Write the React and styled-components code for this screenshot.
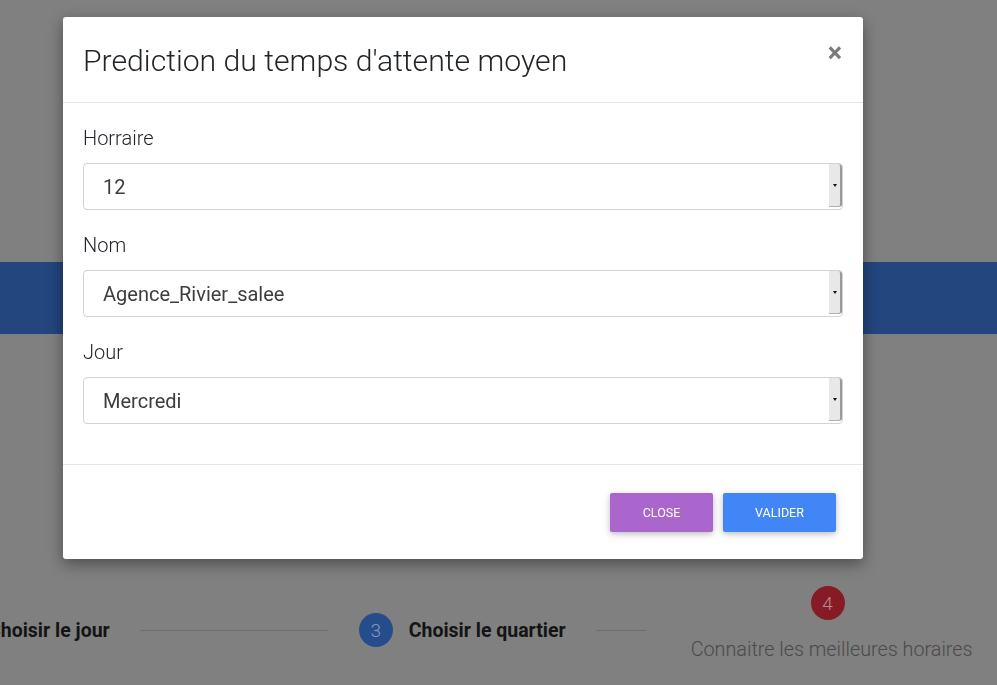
import styled, { createGlobalStyle } from 'styled-components'

const GlobalStyle = createGlobalStyle`
  body {
    margin: 0;
    font-family: Roboto, "Liberation Sans", sans-serif;
    background: #808080;
    overflow: hidden;
  }
`

const Page = styled.div`
  width: 997px;
  height: 685px;
  background: #808080;
  display: flex;
  flex-direction: column;
`

const Band = styled.div`
  margin-top: 262px;
  height: 72px;
  background: #22467d;
`

const Stepper = styled.div`
  margin-top: 252px;
  margin-left: -62px;
  height: 88px;
  display: flex;
  align-items: center;
`

const Circle = styled.div`
  width: 34px;
  height: 34px;
  border-radius: 50%;
  background: ${(p) => p.color};
  color: ${(p) => p.ink};
  font-size: 19px;
  font-weight: 300;
  display: flex;
  align-items: center;
  justify-content: center;
  flex-shrink: 0;
`

const StepLabel = styled.span`
  margin-left: 16px;
  font-size: 19.5px;
  font-weight: 700;
  color: #141414;
  white-space: nowrap;
`

const Line = styled.div`
  width: ${(p) => p.w}px;
  height: 1px;
  background: #6e6e6e;
  margin: 0 ${(p) => p.after}px 0 ${(p) => p.before}px;
  flex-shrink: 0;
`

const LastStep = styled.div`
  align-self: flex-start;
  display: flex;
  flex-direction: column;
  align-items: center;
  gap: 18px;
  margin-left: 45px;

  & > div {
    margin-right: 8px;
  }
`

const LastLabel = styled.span`
  font-size: 19.8px;
  font-weight: 300;
  color: #4a4a4a;
  white-space: nowrap;
`

const Modal = styled.div`
  position: fixed;
  left: 63px;
  top: 17px;
  width: 800px;
  background: #fff;
  border-radius: 3px;
  box-shadow: 0 5px 15px rgba(0, 0, 0, 0.4);
`

const Header = styled.div`
  height: 85px;
  border-bottom: 1px solid #e5e5e5;
  padding: 0 20px;
  display: flex;
  align-items: center;
  justify-content: space-between;
`

const Title = styled.h4`
  margin: 0;
  font-size: 30.2px;
  font-weight: 300;
  color: #212529;
  padding-top: 2px;
`

const CloseX = styled.span`
  font-size: 27px;
  font-weight: 700;
  color: #7a7a7a;
  margin-top: -14px;
  margin-right: 1px;
`

const Body = styled.div`
  padding: 22px 20px 18px;
  display: flex;
  flex-direction: column;
`

const Group = styled.div`
  display: flex;
  flex-direction: column;
  margin-bottom: 22px;
`

const Label = styled.label`
  font-size: 20px;
  font-weight: 300;
  line-height: 26px;
  color: #212529;
  margin-bottom: 12px;
`

const Select = styled.div`
  height: 45px;
  border: 1px solid #ced4da;
  border-radius: 4px;
  display: flex;
  align-items: stretch;
  overflow: hidden;
`

const Value = styled.span`
  flex: 1;
  display: flex;
  align-items: center;
  padding-left: 19px;
  font-size: 20px;
  color: #3d3d3d;
`

const Arrow = styled.span`
  width: 11px;
  margin: 0 0 2px;
  background: #e8e8e8;
  border-right: 2px solid #9a9a9a;
  border-bottom: 1px solid #b0b0b0;
  border-radius: 0 3px 3px 0;
  display: flex;
  align-items: center;
  justify-content: center;

  &::after {
    content: '';
    border-left: 2.5px solid transparent;
    border-right: 2.5px solid transparent;
    border-top: 3px solid #111;
  }
`

const Footer = styled.div`
  border-top: 1px solid #e5e5e5;
  padding: 28px 27px 27px;
  display: flex;
  justify-content: flex-end;
  gap: 10px;
`

const Button = styled.button`
  width: ${(p) => p.w}px;
  height: 39px;
  border: none;
  border-radius: 2px;
  background: ${(p) => p.bg};
  color: #fff;
  font-family: Roboto, "Liberation Sans", sans-serif;
  font-size: 12.5px;
  text-transform: uppercase;
  box-shadow: 0 2px 5px rgba(0, 0, 0, 0.16), 0 2px 10px rgba(0, 0, 0, 0.12);
`

const fields = [
  { label: 'Horraire', value: '12' },
  { label: 'Nom', value: 'Agence_Rivier_salee' },
  { label: 'Jour', value: 'Mercredi' },
]

export default function App() {
  return (
    <>
      <GlobalStyle />
      <Page>
        <Band />
        <Stepper>
          <Circle color="#22467d" ink="#8a9bb8">2</Circle>
          <StepLabel>Choisir le jour</StepLabel>
          <Line w={188} before={30} after={31} />
          <Circle color="#254d8c" ink="#8a9bb8">3</Circle>
          <StepLabel>Choisir le quartier</StepLabel>
          <Line w={50} before={30} after={0} />
          <LastStep>
            <Circle color="#861b25" ink="#b98a8f">4</Circle>
            <LastLabel>Connaitre les meilleures horaires</LastLabel>
          </LastStep>
        </Stepper>
      </Page>
      <Modal>
        <Header>
          <Title>Prediction du temps d'attente moyen</Title>
          <CloseX>×</CloseX>
        </Header>
        <Body>
          {fields.map((f) => (
            <Group key={f.label}>
              <Label>{f.label}</Label>
              <Select>
                <Value>{f.value}</Value>
                <Arrow />
              </Select>
            </Group>
          ))}
        </Body>
        <Footer>
          <Button w={103} bg="#aa66cc">Close</Button>
          <Button w={113} bg="#4285f4">Valider</Button>
        </Footer>
      </Modal>
    </>
  )
}
